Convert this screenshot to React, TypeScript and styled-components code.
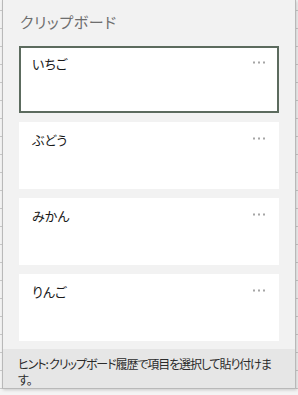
import React from "react";
import styled, { createGlobalStyle } from "styled-components";

const Global = createGlobalStyle`
  html, body {
    margin: 0;
    padding: 0;
  }
  body {
    width: 298px;
    height: 395px;
    overflow: hidden;
    background-color: #f4f4f4;
    background-image:
      repeating-linear-gradient(to bottom, transparent 0px, transparent 10px, #c9c9c9 10px, #c9c9c9 11px, transparent 11px, transparent 18px);
    font-family: "Noto Sans CJK JP", "Noto Sans", sans-serif;
    font-feature-settings: "palt";
  }
`;

const Panel = styled.div`
  box-sizing: border-box;
  margin-left: 2px;
  width: 294px;
  height: 389px;
  background: #f2f2f2;
  border: 1px solid #b9b9b9;
  border-top: none;
  box-shadow: 1px 1px 3px rgba(0, 0, 0, 0.18);
  display: flex;
  flex-direction: column;
`;

const Title = styled.div`
  height: 46px;
  box-sizing: border-box;
  padding: 12px 0 0 17px;
  font-size: 15px;
  line-height: 20px;
  color: #6e6e6e;
  letter-spacing: 0.6px;
`;

const List = styled.div`
  display: flex;
  flex-direction: column;
  gap: 9px;
  padding: 0 0 0 16px;
`;

const Card = styled.div<{ $selected?: boolean }>`
  box-sizing: border-box;
  width: 260px;
  height: 67px;
  background: #ffffff;
  border: 2px solid ${(p) => (p.$selected ? "#5c6b5e" : "#ffffff")};
  padding: 7px 11px 0 11px;
  display: flex;
  justify-content: space-between;
  align-items: flex-start;
`;

const CardText = styled.span`
  font-size: 13px;
  line-height: 18px;
  color: #1a1a1a;
`;

const More = styled.svg`
  margin-top: 6px;
`;

const Footer = styled.div`
  margin-top: auto;
  height: 39px;
  box-sizing: border-box;
  background: #e6e6e6;
  padding: 7px 0 0 15px;
  font-size: 12px;
  line-height: 16px;
  letter-spacing: -1.1px;
  white-space: nowrap;
  color: #2b2b2b;
`;

const Dots = () => (
  <More width="14" height="3" viewBox="0 0 14 3">
    <rect x="1" y="0.5" width="2" height="2" fill="#a6a6a6" />
    <rect x="6" y="0.5" width="2" height="2" fill="#a6a6a6" />
    <rect x="11" y="0.5" width="2" height="2" fill="#a6a6a6" />
  </More>
);

const items = ["いちご", "ぶどう", "みかん", "りんご"];

export default function App() {
  return (
    <>
      <Global />
      <Panel>
        <Title>クリップボード</Title>
        <List>
          {items.map((t, i) => (
            <Card key={t} $selected={i === 0}>
              <CardText>{t}</CardText>
              <Dots />
            </Card>
          ))}
        </List>
        <Footer>
          ヒント: クリップボード履歴で項目を選択して貼り付けま
          <br />
          す。
        </Footer>
      </Panel>
    </>
  );
}
